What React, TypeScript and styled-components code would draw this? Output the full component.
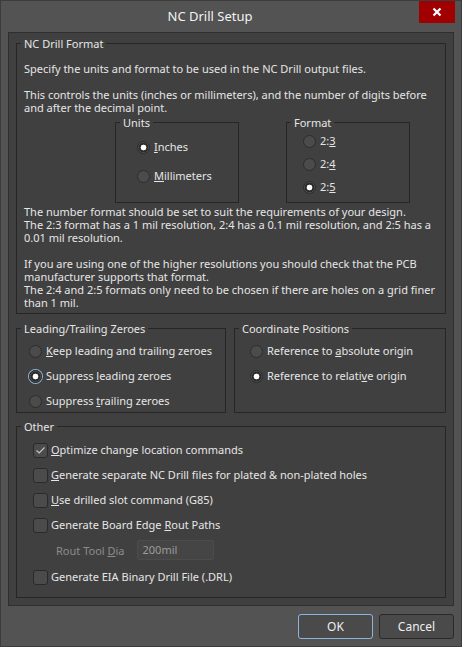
import React from 'react';
import styled, { createGlobalStyle } from 'styled-components';

const GlobalStyle = createGlobalStyle`
  html, body {
    margin: 0;
    padding: 0;
    background: #535353;
  }
  body {
    font-family: "Noto Sans", "Open Sans", sans-serif;
    font-size: 11px;
    color: #e6e6e6;
  }
  * {
    box-sizing: border-box;
  }
`;

const Window = styled.div`
  width: 462px;
  height: 647px;
  background: #535353;
  border: 1px solid #3c3c3c;
  display: flex;
  flex-direction: column;
`;

const TitleBar = styled.div`
  height: 31px;
  display: flex;
  align-items: flex-start;
`;

const Title = styled.div`
  flex: 1;
  text-align: center;
  font-size: 13px;
  line-height: 30px;
  color: #f2f2f2;
`;

const CloseButton = styled.button`
  width: 36px;
  height: 22px;
  margin-right: 6px;
  border: none;
  background: #a00000;
  display: flex;
  align-items: center;
  justify-content: center;
  padding: 0;
`;

const Panel = styled.div`
  margin: 0 7px;
  height: 574px;
  background: #404040;
  border: 1px solid #2f2f2f;
  padding: 4px 7px 7px;
  display: flex;
  flex-direction: column;
`;

const Group = styled.fieldset<{ $width?: number; $height?: number; $grow?: boolean }>`
  margin: 0;
  border: 1px solid #262626;
  padding: 0 7px;
  min-width: 0;
  ${({ $width }) => ($width ? `width: ${$width}px;` : '')}
  ${({ $height }) => ($height ? `height: ${$height}px;` : '')}
  ${({ $grow }) => ($grow ? 'flex: 1;' : '')}
`;

const Legend = styled.legend`
  padding: 0 3px;
  margin-left: -3px;
  font-size: 11px;
  line-height: 13px;
  color: #e6e6e6;
`;

const Para = styled.p<{ $gap?: number }>`
  margin: ${({ $gap }) => $gap ?? 0}px 0 0;
  line-height: 13px;
`;

const OptionsRow = styled.div`
  display: flex;
  gap: 47px;
  margin: 2px 0 0 91px;
`;

const RadioList = styled.div<{ $gap: number; $top: number; $left: number }>`
  display: flex;
  flex-direction: column;
  gap: ${({ $gap }) => $gap}px;
  padding: ${({ $top }) => $top}px 0 0 ${({ $left }) => $left}px;
`;

const OptionLabel = styled.label<{ $gap?: number }>`
  display: flex;
  align-items: center;
  gap: ${({ $gap }) => $gap ?? 4}px;
  height: 14px;
  line-height: 14px;
  color: #e6e6e6;
  white-space: nowrap;
`;

const RadioDot = styled.span<{ $checked?: boolean; $focus?: boolean }>`
  width: 13px;
  height: 13px;
  border-radius: 50%;
  flex: none;
  background: ${({ $checked }) =>
    $checked
      ? 'radial-gradient(circle, #ffffff 0 2.6px, #2a2a2a 3.2px 4.4px, #4a4a4a 5px)'
      : '#4b4b4b'};
  border: 1px solid #2c2c2c;
  box-shadow: ${({ $focus }) => ($focus ? '0 0 0 1px #8fb4dc' : 'none')};
`;

const CheckBox = styled.span`
  width: 15px;
  height: 15px;
  flex: none;
  border-radius: 3px;
  background: #4b4b4b;
  border: 1px solid #2a2a2a;
  display: flex;
  align-items: center;
  justify-content: center;
`;

const Key = styled.u`
  text-underline-offset: 1px;
`;

const ZeroRow = styled.div`
  display: flex;
  gap: 8px;
  margin-top: 8px;
`;

const OtherGroup = styled(Group)`
  margin-top: 7px;
  flex: 1;
`;

const CheckList = styled.div`
  display: flex;
  flex-direction: column;
  gap: 11px;
  padding: 10px 0 0 9px;
`;

const ToolRow = styled.div`
  display: flex;
  align-items: center;
  gap: 12px;
  padding-left: 23px;
  margin: -3px 0 -1px;
`;

const ToolLabel = styled.span`
  color: #8c8c8c;
`;

const ToolInput = styled.div`
  width: 77px;
  height: 20px;
  background: #454545;
  border: 1px solid #4c4c4c;
  border-radius: 2px;
  color: #9c9c9c;
  padding-left: 5px;
  line-height: 18px;
`;

const Footer = styled.div`
  display: flex;
  justify-content: flex-end;
  gap: 6px;
  padding: 8px 7px 0 0;
`;

const Button = styled.button<{ $primary?: boolean }>`
  width: 75px;
  height: 25px;
  border-radius: 3px;
  background: #4a4a4a;
  border: 1px solid ${({ $primary }) => ($primary ? '#8fb4dc' : '#2a2a2a')};
  color: #eeeeee;
  font-family: inherit;
  font-size: 12px;
  padding: 0;
`;

const Radio = ({ checked, focus, children }: { checked?: boolean; focus?: boolean; children: React.ReactNode }) => (
  <OptionLabel>
    <RadioDot $checked={checked} $focus={focus} />
    <span>{children}</span>
  </OptionLabel>
);

const Check = ({ checked, children }: { checked?: boolean; children: React.ReactNode }) => (
  <OptionLabel $gap={3}>
    <CheckBox>
      {checked && (
        <svg width="11" height="9" viewBox="0 0 11 9">
          <path d="M1.5 4.5 L4.2 7 L9.5 1.5" fill="none" stroke="#c8c8c8" strokeWidth="1.1" />
        </svg>
      )}
    </CheckBox>
    <span>{children}</span>
  </OptionLabel>
);

export default function App() {
  return (
    <>
      <GlobalStyle />
      <Window>
        <TitleBar>
          <Title>NC Drill Setup</Title>
          <CloseButton aria-label="Close">
            <svg width="10" height="10" viewBox="0 0 10 10">
              <path d="M1.5 1.5 L8.5 8.5 M8.5 1.5 L1.5 8.5" stroke="#ffffff" strokeWidth="2.2" />
            </svg>
          </CloseButton>
        </TitleBar>

        <Panel>
          <Group $height={277}>
            <Legend>NC Drill Format</Legend>
            <Para $gap={12}>Specify the units and format to be used in the NC Drill output files.</Para>
            <Para $gap={13}>
              This controls the units (inches or millimeters), and the number of digits before
              <br />
              and after the decimal point.
            </Para>
            <OptionsRow>
              <Group $width={124} $height={87}>
                <Legend>Units</Legend>
                <RadioList $gap={15} $top={11} $left={14}>
                  <Radio checked>
                    <Key>I</Key>nches
                  </Radio>
                  <Radio>
                    <Key>M</Key>illimeters
                  </Radio>
                </RadioList>
              </Group>
              <Group $width={124} $height={87}>
                <Legend>Format</Legend>
                <RadioList $gap={9} $top={5} $left={9}>
                  <Radio>
                    2:<Key>3</Key>
                  </Radio>
                  <Radio>
                    2:<Key>4</Key>
                  </Radio>
                  <Radio checked>
                    2:<Key>5</Key>
                  </Radio>
                </RadioList>
              </Group>
            </OptionsRow>
            <Para $gap={2}>
              The number format should be set to suit the requirements of your design.
              <br />
              The 2:3 format has a 1 mil resolution, 2:4 has a 0.1 mil resolution, and 2:5 has a
              <br />
              0.01 mil resolution.
            </Para>
            <Para $gap={13}>
              If you are using one of the higher resolutions you should check that the PCB
              <br />
              manufacturer supports that format.
              <br />
              The 2:4 and 2:5 formats only need to be chosen if there are holes on a grid finer
              <br />
              than 1 mil.
            </Para>
          </Group>

          <ZeroRow>
            <Group $width={210} $height={91}>
              <Legend>Leading/Trailing Zeroes</Legend>
              <RadioList $gap={11} $top={9} $left={5}>
                <Radio>
                  <Key>K</Key>eep leading and trailing zeroes
                </Radio>
                <Radio checked focus>
                  Suppress <Key>l</Key>eading zeroes
                </Radio>
                <Radio>
                  Suppress <Key>t</Key>railing zeroes
                </Radio>
              </RadioList>
            </Group>
            <Group $grow $height={91}>
              <Legend>Coordinate Positions</Legend>
              <RadioList $gap={11} $top={9} $left={8}>
                <Radio>
                  Reference to <Key>a</Key>bsolute origin
                </Radio>
                <Radio checked>
                  Reference to relati<Key>v</Key>e origin
                </Radio>
              </RadioList>
            </Group>
          </ZeroRow>

          <OtherGroup>
            <Legend>Other</Legend>
            <CheckList>
              <Check checked>
                <Key>O</Key>ptimize change location commands
              </Check>
              <Check>
                <Key>G</Key>enerate separate NC Drill files for plated &amp; non-plated holes
              </Check>
              <Check>
                <Key>U</Key>se drilled slot command (G85)
              </Check>
              <Check>
                Generate Board Edge <Key>R</Key>out Paths
              </Check>
              <ToolRow>
                <ToolLabel>
                  Rout Tool <Key>D</Key>ia
                </ToolLabel>
                <ToolInput>200mil</ToolInput>
              </ToolRow>
              <Check>Generate EIA Binary Drill File (.DRL)</Check>
            </CheckList>
          </OtherGroup>
        </Panel>

        <Footer>
          <Button $primary>OK</Button>
          <Button>Cancel</Button>
        </Footer>
      </Window>
    </>
  );
}
